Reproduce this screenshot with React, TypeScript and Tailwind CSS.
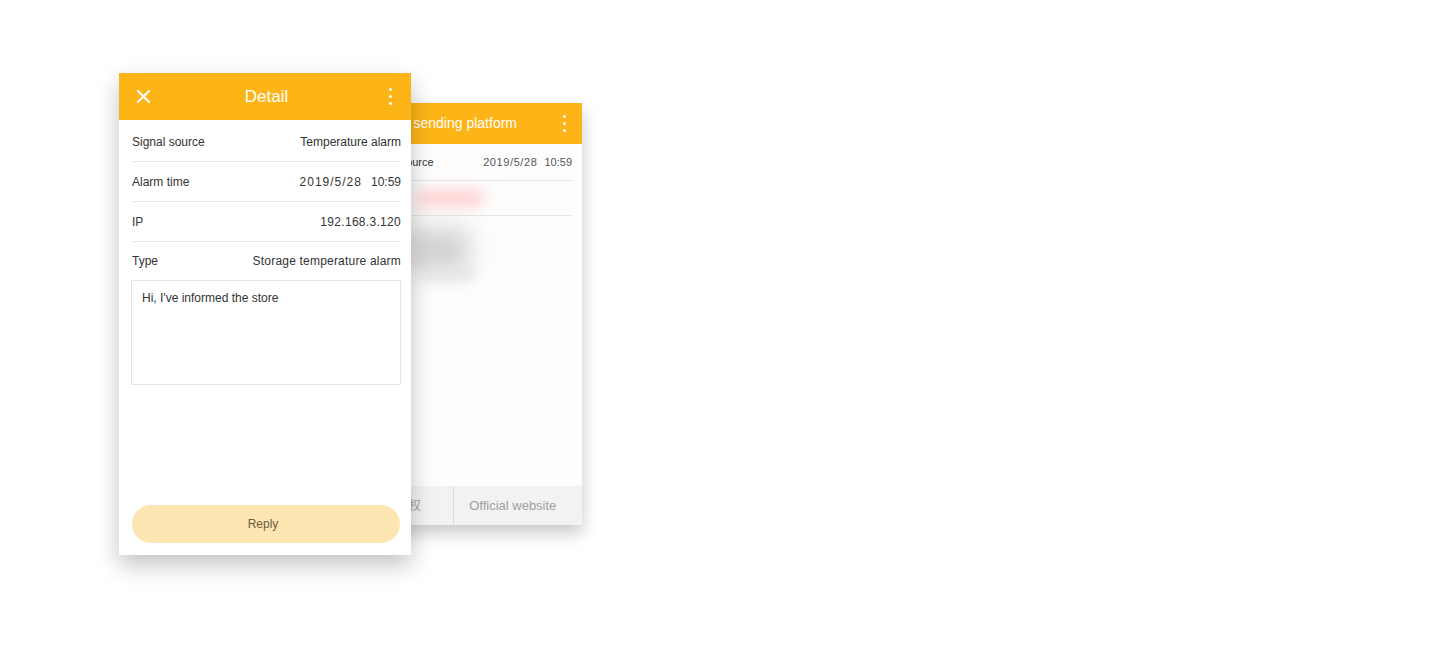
import React from 'react';

type Row = { label: string; value: React.ReactNode };

const DateTime = () => (
  <span>
    <span className="tracking-[1px]">2019/5/28</span>
    <span className="ml-[9px]">10:59</span>
  </span>
);

const rows: Row[] = [
  { label: 'Signal source', value: 'Temperature alarm' },
  { label: 'Alarm time', value: <DateTime /> },
  { label: 'IP', value: <span className="tracking-[0.3px]">192.168.3.120</span> },
];

const Kebab = ({ className = '' }: { className?: string }) => (
  <div className={`flex flex-col items-center gap-[4px] ${className}`}>
    <span className="w-[3px] h-[3px] bg-white rounded-full" />
    <span className="w-[3px] h-[3px] bg-white rounded-full" />
    <span className="w-[3px] h-[3px] bg-white rounded-full" />
  </div>
);

const BackCard: React.FC = () => (
  <div className="absolute left-[206px] top-[30px] w-[257px] h-[422px] bg-[#fdfdfd] flex flex-col shadow-[0_8px_16px_rgba(0,0,0,0.22)]">
    <div className="h-[41px] bg-[#fdb417] flex items-center justify-end pr-[16px]">
      <span className="text-white text-[14px] mr-[46px]">Message sending platform</span>
      <Kebab />
    </div>
    <div className="px-[10px]">
      <div className="h-[37px] flex items-center justify-between border-b border-[#e6e6e6] text-[11px] text-[#333]">
        <span className="ml-[32px]">Signal source</span>
        <span className="text-[#555]">
          <span className="tracking-[0.6px]">2019/5/28</span>
          <span className="ml-[7px]">10:59</span>
        </span>
      </div>
      <div className="h-[35px] flex items-center border-b border-[#e6e6e6]">
        <div className="ml-[80px] w-[70px] h-[16px] bg-[#ffd0d0] blur-[7px] rounded-full" />
      </div>
      <div className="pt-[12px] pl-[70px]">
        <div className="w-[64px] h-[44px] bg-[#d2d2d2] blur-[12px] rounded-lg" />
        <div className="-mt-[4px] ml-[24px] w-[44px] h-[10px] bg-[#e2e2e2] blur-[6px] rounded" />
      </div>
    </div>
    <div className="mt-auto h-[39px] bg-[#f2f2f2] flex text-[#a0a0a0]">
      <div className="w-1/2 flex items-center justify-center border-r border-[#dcdcdc] text-[12px]">
        <span className="ml-[4px]">平台使用权</span>
      </div>
      <div className="w-1/2 flex items-center justify-center text-[13px]">
        <span className="mr-[10px]">Official website</span>
      </div>
    </div>
  </div>
);

const App: React.FC = () => {
  return (
    <div className="w-full h-[658px] bg-white overflow-hidden font-['Liberation_Sans','Noto_Sans_CJK_SC',sans-serif]">
      <div className="relative ml-[119px] mt-[73px] w-[463px] h-[482px]">
        <BackCard />

        <div className="relative z-10 w-[292px] h-[482px] bg-white flex flex-col shadow-[0_10px_22px_rgba(0,0,0,0.24)]">
          <div className="h-[47px] bg-[#fdb417] flex items-center justify-between px-[18px] shrink-0">
            <svg width="13" height="13" viewBox="0 0 13 13">
              <path d="M1 1L12 12M12 1L1 12" stroke="white" strokeWidth="2" strokeLinecap="square" />
            </svg>
            <span className="text-white text-[17px] -ml-[6px]">Detail</span>
            <Kebab className="mr-[1px]" />
          </div>

          <div className="pl-[13px] pr-[10px] pt-[2px] text-[12px] text-[#333]">
            {rows.map(r => (
              <div key={r.label} className="h-[40px] flex items-center justify-between border-b border-[#e5e5e5]">
                <span>{r.label}</span>
                {r.value}
              </div>
            ))}
            <div className="h-[38px] flex items-center justify-between">
              <span>Type</span>
              <span className="tracking-[0.2px]">Storage temperature alarm</span>
            </div>
            <div className="h-[105px] -ml-[1px] border border-[#e5e5e5] px-[10px] pt-[8px]">
              Hi, I've informed the store
            </div>
          </div>

          <div className="mt-auto pl-[13px] pr-[11px] pb-[12px]">
            <button className="w-full h-[38px] rounded-full bg-[#fde6b2] text-[12px] text-[#6b5c3d] pr-[6px]">
              Reply
            </button>
          </div>
        </div>
      </div>
    </div>
  );
};

export default App;
